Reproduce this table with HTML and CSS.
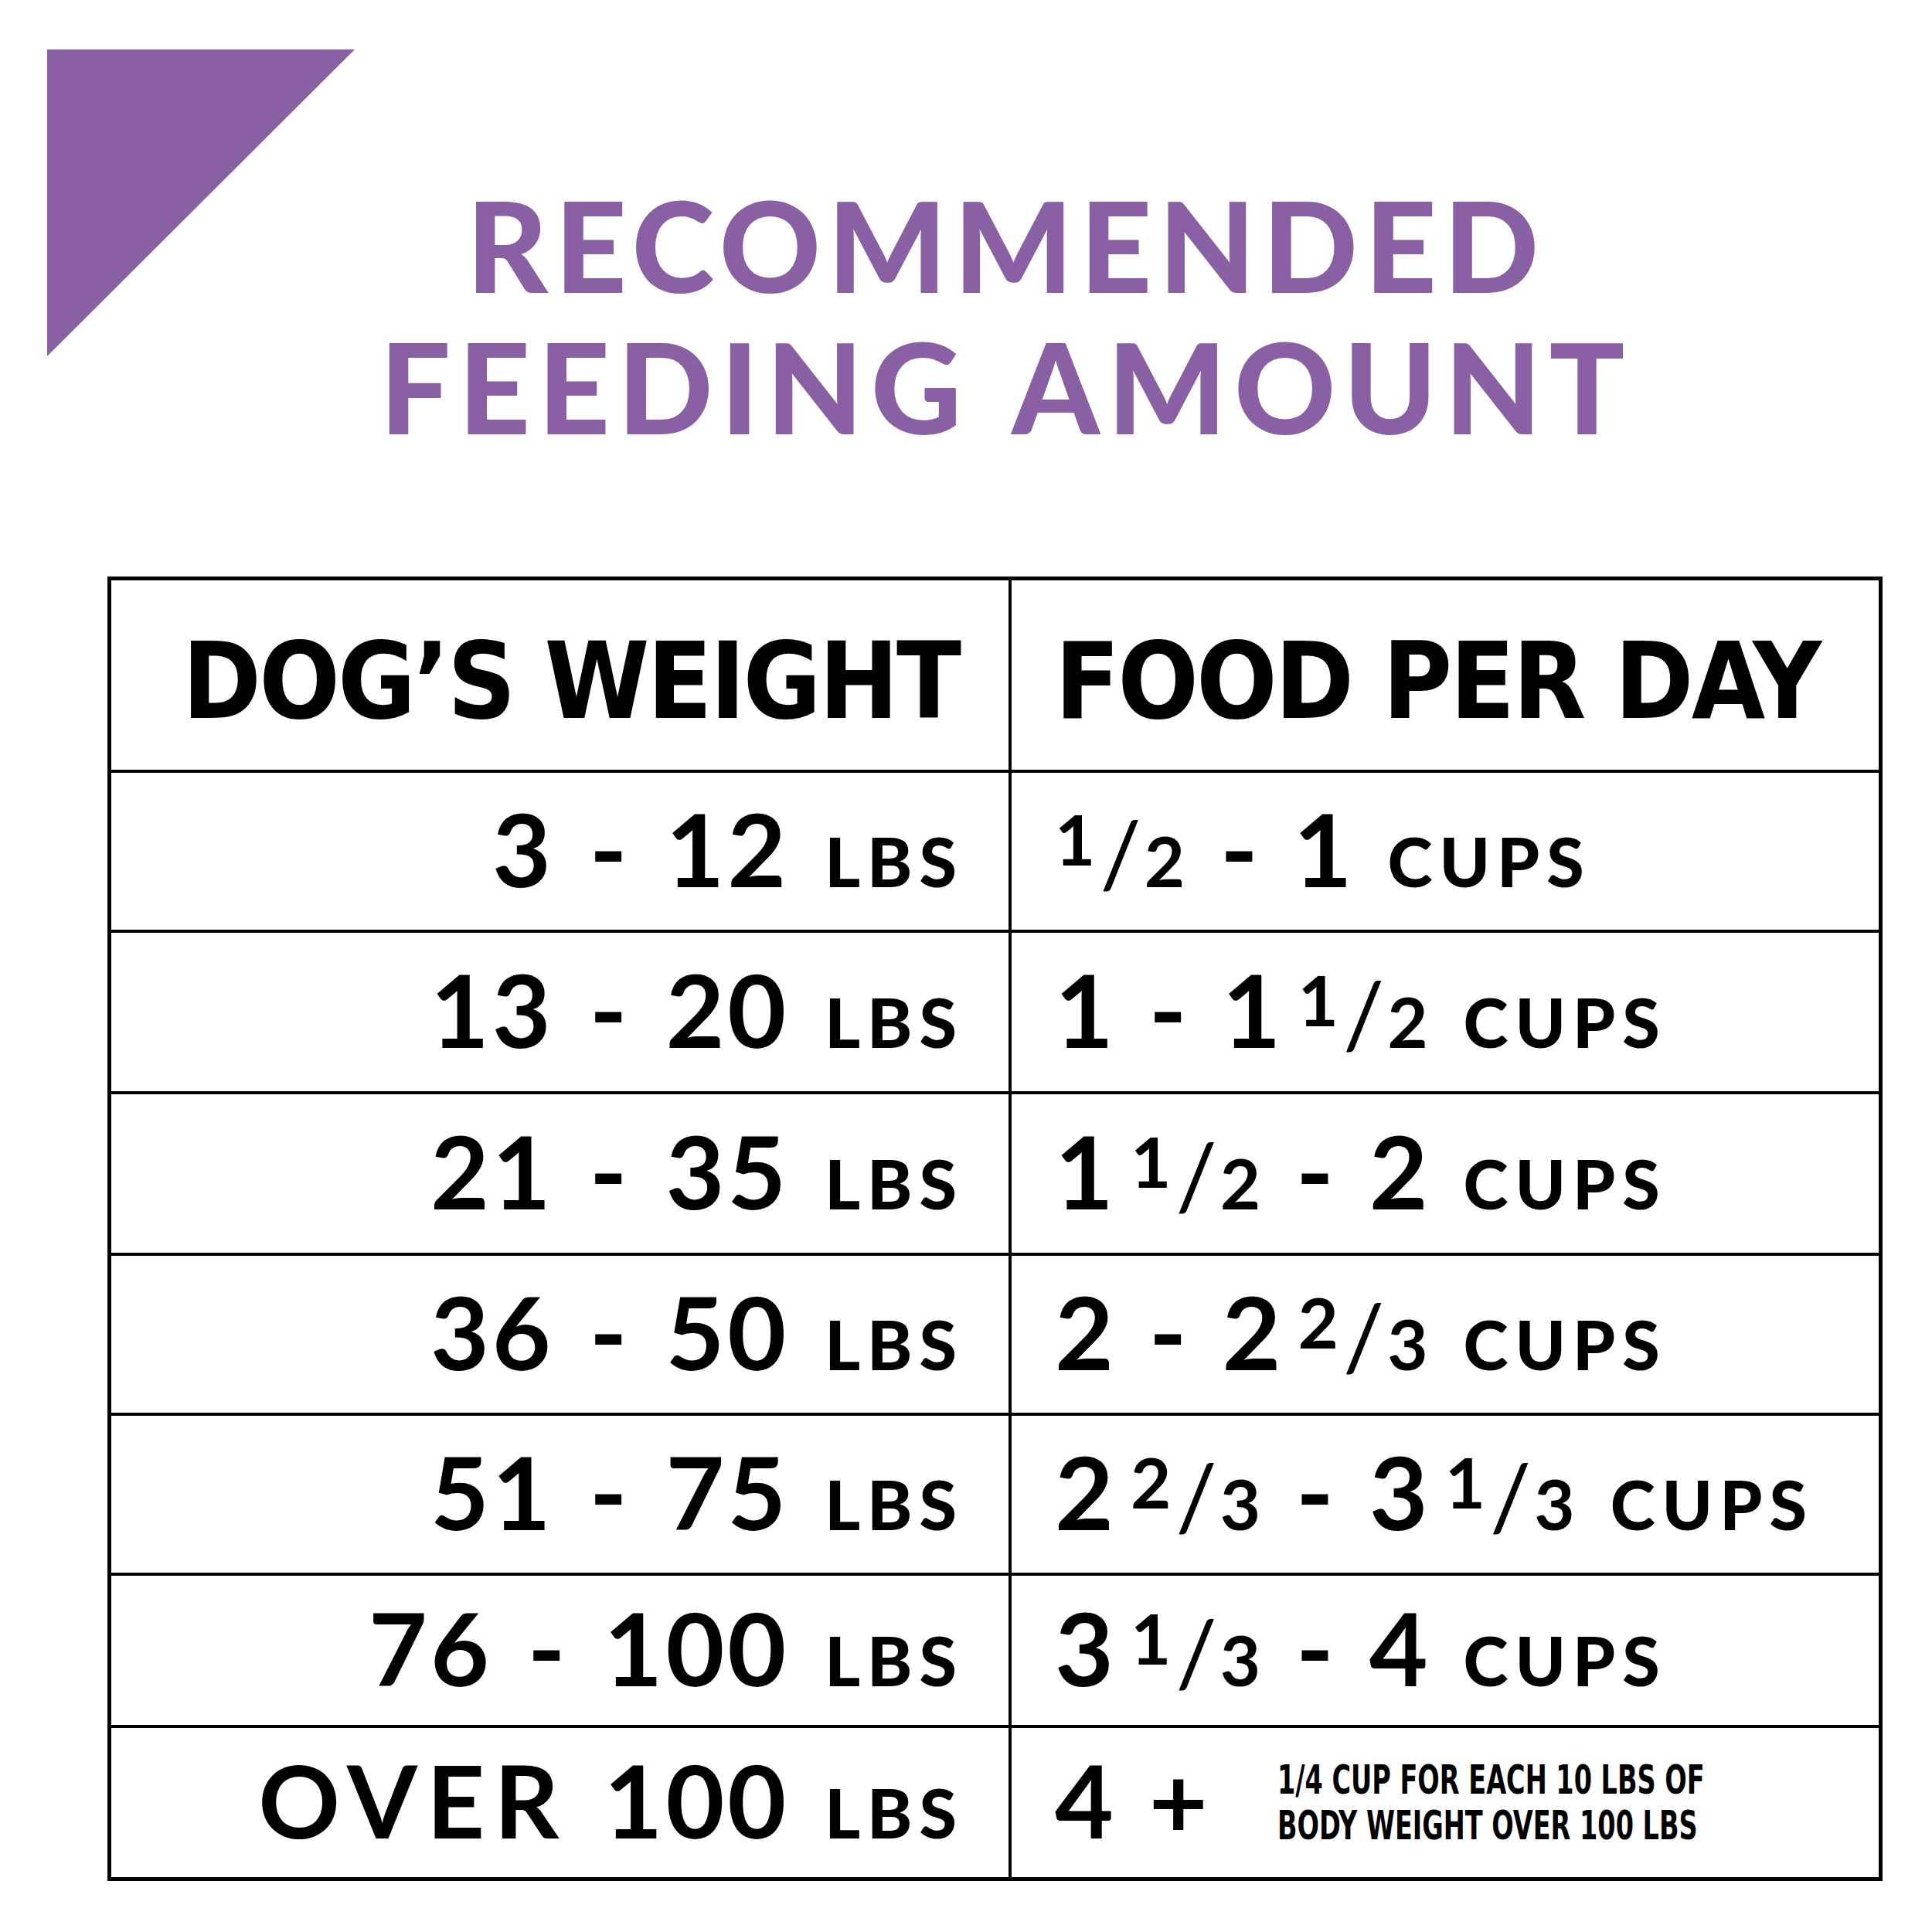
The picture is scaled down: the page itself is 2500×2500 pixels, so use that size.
FILE: index.html
```html
<!DOCTYPE html>
<html lang="en">
<head>
<meta charset="utf-8">
<title>Recommended Feeding Amount</title>
<link rel="stylesheet" href="styles.css">
</head>
<body>
<div class="page">
  <header class="top">
    <div class="corner"></div>
    <h1 class="title"><span class="line">RECOMMENDED</span><span class="line second">FEEDING AMOUNT</span></h1>
  </header>

  <section class="chart">
    <div class="cell left head"><span class="hd">DOG’S WEIGHT</span></div>
    <div class="cell right head"><span class="hd">FOOD PER DAY</span></div>

    <div class="cell left"><span class="val">3 - 12 <span class="u">LBS</span></span></div>
    <div class="cell right"><span class="val"><span class="fr"><span class="n">1</span><span class="sl">/</span><span class="d">2</span></span> - 1 <span class="u">CUPS</span></span></div>

    <div class="cell left"><span class="val">13 - 20 <span class="u">LBS</span></span></div>
    <div class="cell right"><span class="val">1 - 1<span class="fr sp"><span class="n">1</span><span class="sl">/</span><span class="d">2</span></span> <span class="u">CUPS</span></span></div>

    <div class="cell left"><span class="val">21 - 35 <span class="u">LBS</span></span></div>
    <div class="cell right"><span class="val">1<span class="fr sp"><span class="n">1</span><span class="sl">/</span><span class="d">2</span></span> - 2 <span class="u">CUPS</span></span></div>

    <div class="cell left"><span class="val">36 - 50 <span class="u">LBS</span></span></div>
    <div class="cell right"><span class="val">2 - 2<span class="fr sp"><span class="n">2</span><span class="sl">/</span><span class="d">3</span></span> <span class="u">CUPS</span></span></div>

    <div class="cell left"><span class="val">51 - 75 <span class="u">LBS</span></span></div>
    <div class="cell right"><span class="val">2<span class="fr sp"><span class="n">2</span><span class="sl">/</span><span class="d">3</span></span> - 3<span class="fr sp"><span class="n">1</span><span class="sl">/</span><span class="d">3</span></span> <span class="u">CUPS</span></span></div>

    <div class="cell left"><span class="val">76 - 100 <span class="u">LBS</span></span></div>
    <div class="cell right"><span class="val">3<span class="fr sp"><span class="n">1</span><span class="sl">/</span><span class="d">3</span></span> - 4 <span class="u">CUPS</span></span></div>

    <div class="cell left"><span class="val"><span class="wide">OVER</span> 100 <span class="u">LBS</span></span></div>
    <div class="cell right"><span class="val">4 +</span><span class="note">1/4 CUP FOR EACH 10 LBS OF<br>BODY WEIGHT OVER 100 LBS</span></div>
  </section>
</div>
</body>
</html>
```

FILE: styles.css
```css
html, body {
  margin: 0;
  padding: 0;
  background: #ffffff;
}

.page {
  width: 2500px;
  min-height: 2500px;
  background: #ffffff;
}

/* ---------- top area ---------- */
.top {
  display: grid;
  grid-template-columns: 1fr;
  grid-template-rows: 746px;
}

.corner {
  grid-area: 1 / 1;
  align-self: start;
  justify-self: start;
  width: 398px;
  height: 397px;
  margin: 64px 0 0 61px;
  background: #8a60a4;
  clip-path: polygon(0 0, 100% 0, 0 100%);
}

.title {
  grid-area: 1 / 1;
  align-self: start;
  margin: 225px 0 0 0;
  padding-left: 104px;
  text-align: center;
  font-family: "Lato", "Liberation Sans", sans-serif;
  font-weight: 900;
  font-size: 162px;
  line-height: 183px;
  letter-spacing: 9px;
  color: #8a60a4;
}

.title .line {
  display: block;
}

.title .second {
  letter-spacing: 10px;
  word-spacing: 12px;
}

/* ---------- chart ---------- */
.chart {
  box-sizing: border-box;
  width: 2297px;
  margin-left: 139px;
  border: 5px solid #000;
  background: #000;
  display: grid;
  grid-template-columns: 1161px 1122px;
  grid-template-rows: 245px 203px 205px 205px 203px 203px 193px 193px;
  gap: 4px;
}

.cell {
  background: #fff;
  display: flex;
  align-items: center;
  color: #000;
  box-sizing: border-box;
}

.cell.left {
  justify-content: flex-end;
  padding-right: 67px;
}

.cell.right {
  justify-content: flex-start;
  padding-left: 56px;
}

.cell.head {
  padding-top: 16px;
}

.hd {
  font-family: "DejaVu Sans Condensed", "DejaVu Sans", sans-serif;
  font-stretch: condensed;
  font-weight: 700;
  font-size: 137px;
  line-height: 1;
  letter-spacing: -3px;
  white-space: nowrap;
}

.cell.left .hd {
  margin-right: -3px;
}

.val {
  font-family: "Lato", "Liberation Sans", sans-serif;
  font-weight: 700;
  font-size: 131px;
  line-height: 1;
  word-spacing: 14px;
  white-space: nowrap;
  padding-bottom: 8px;
}

.cell.left .val {
  letter-spacing: 4px;
  word-spacing: 10px;
}

.wide {
  letter-spacing: 12px;
}

.u {
  font-weight: 900;
  font-size: 88px;
  line-height: 0;
  letter-spacing: 9px;
  margin-right: -9px;
}

.fr {
  line-height: 0;
  word-spacing: 0;
}

.fr.sp {
  margin-left: 22px;
}

.fr .n {
  font-size: 0.69em;
  vertical-align: 0.31em;
  line-height: 0;
}

.fr .sl {
  font-weight: 400;
  font-size: 0.9em;
  line-height: 0;
  margin: 0 4px 0 6px;
}

.fr .d {
  font-size: 0.69em;
  line-height: 0;
}

.note {
  display: inline-block;
  margin-left: 90px;
  font-family: "DejaVu Sans Condensed", "DejaVu Sans", sans-serif;
  font-stretch: condensed;
  font-weight: 700;
  font-size: 51px;
  line-height: 59px;
  white-space: nowrap;
  transform: scaleX(0.73);
  transform-origin: left center;
}
```
